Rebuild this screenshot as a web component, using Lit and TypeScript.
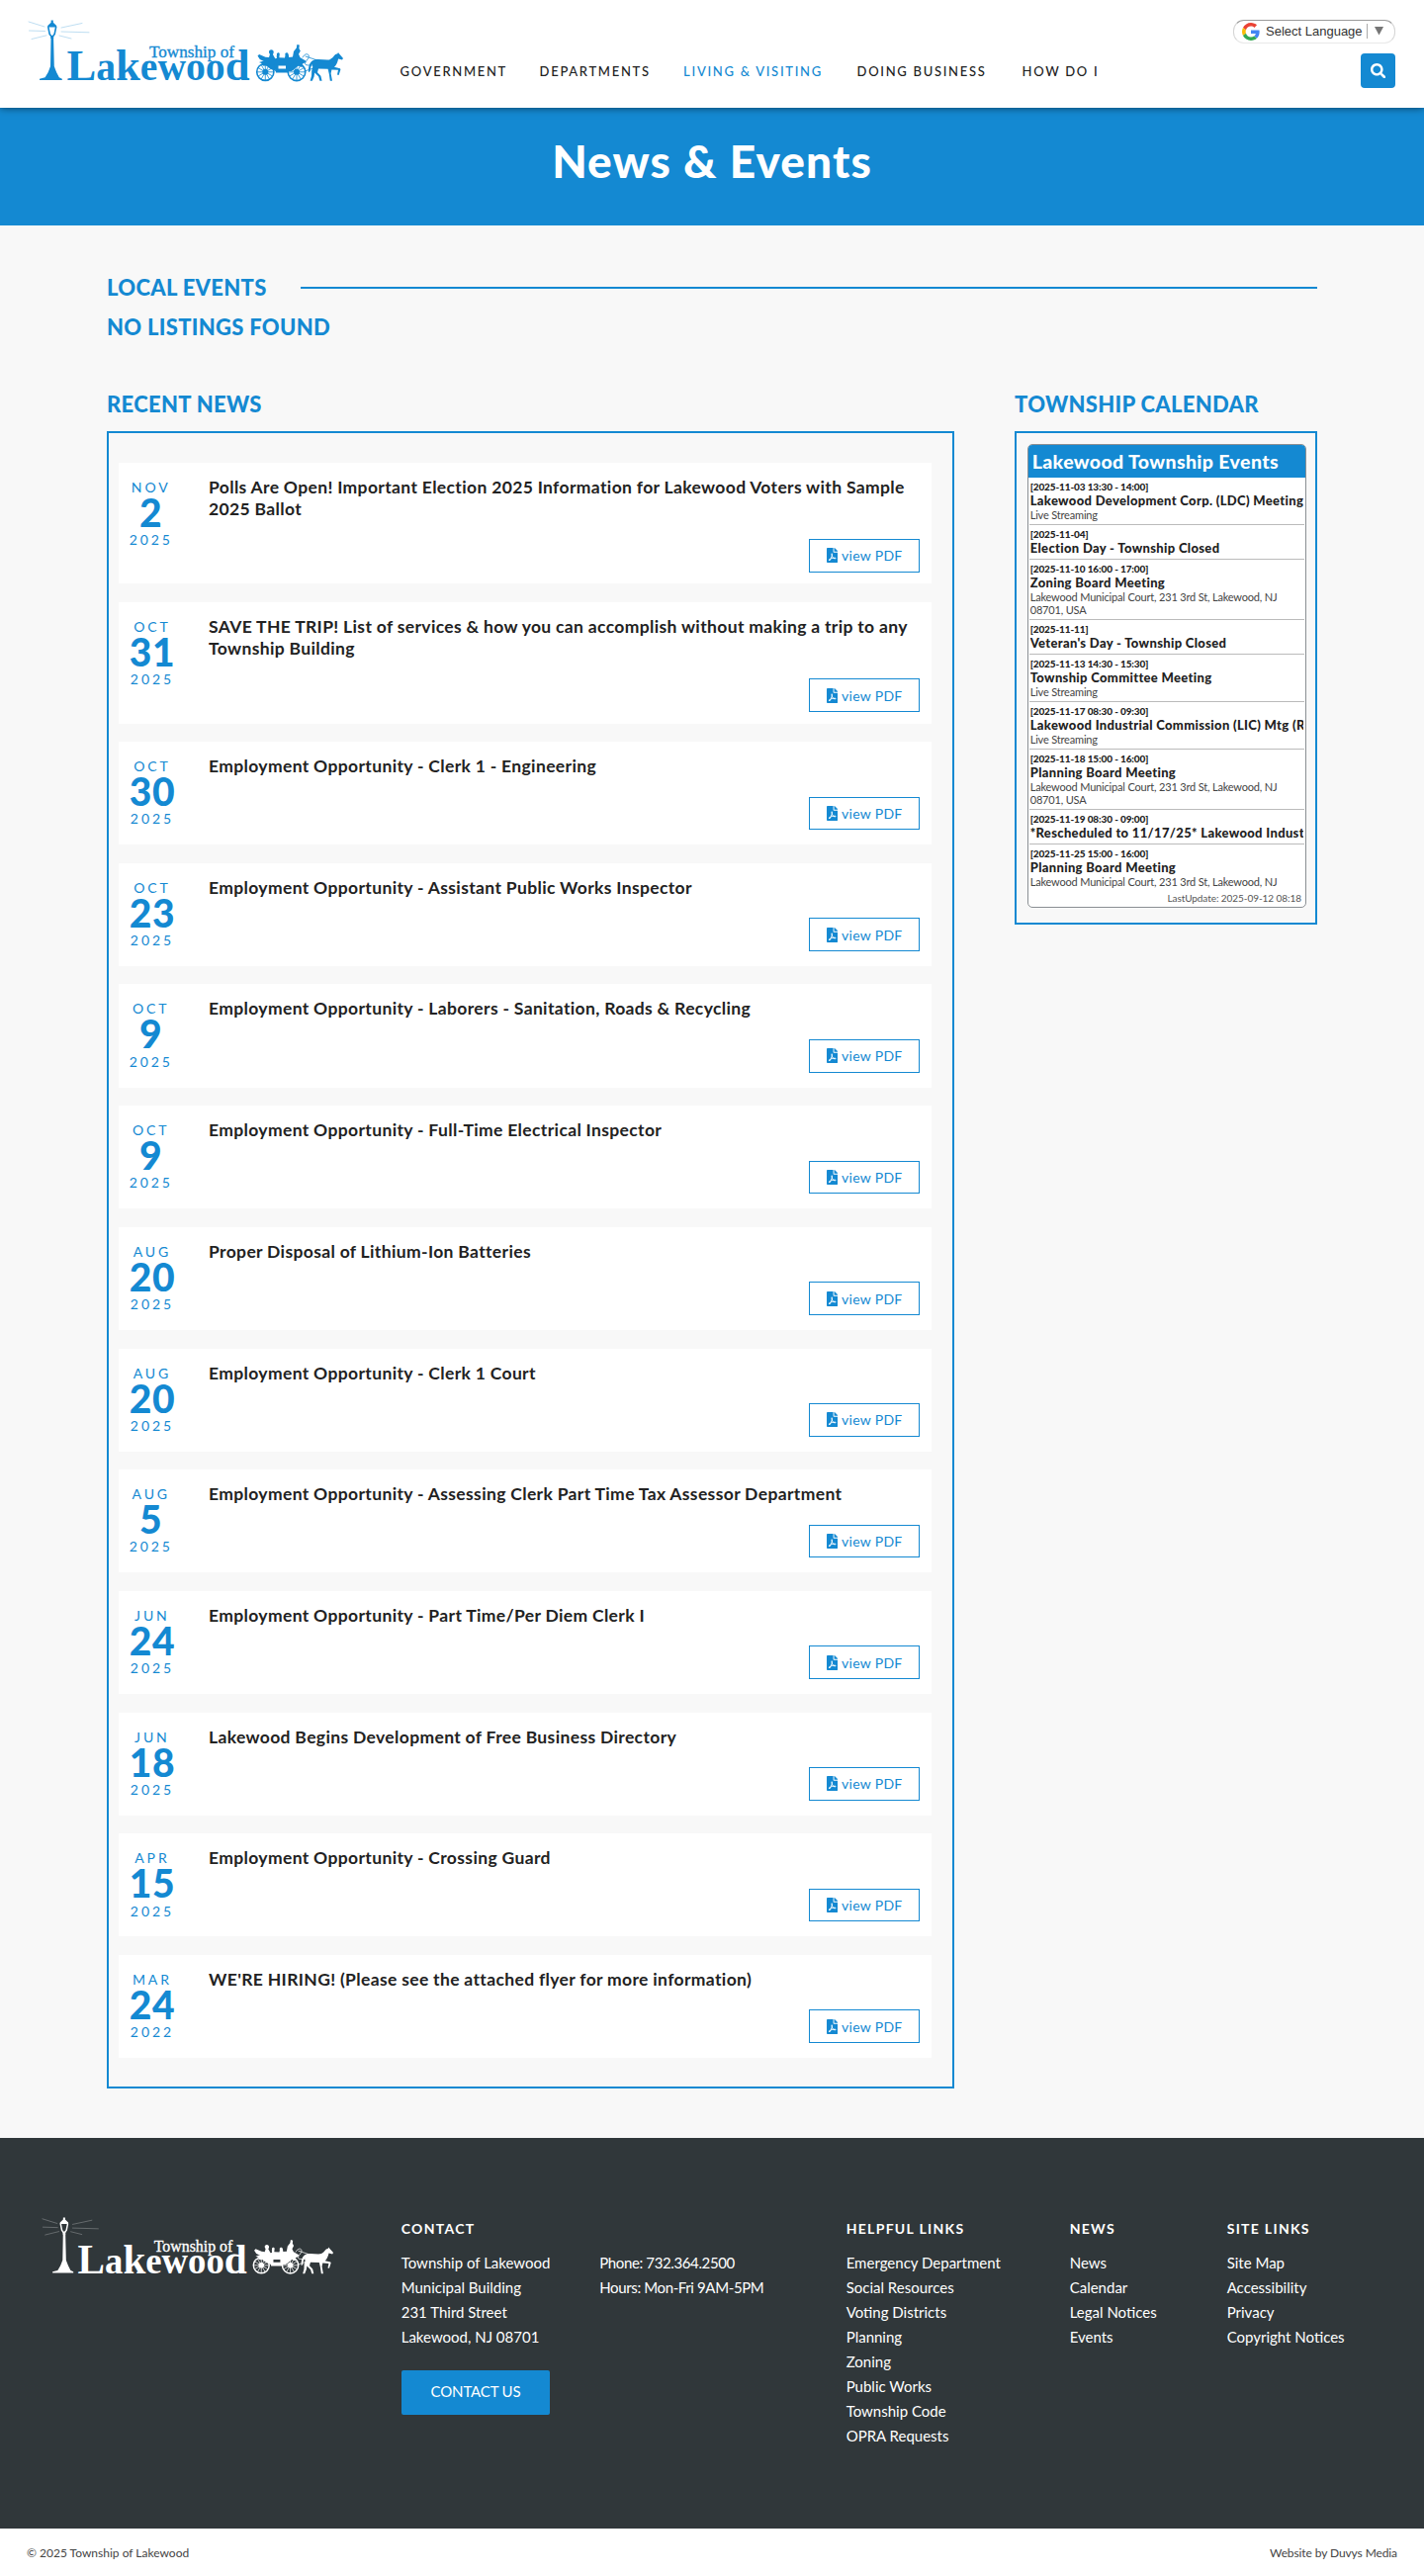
import { LitElement, html, svg, css, nothing } from 'lit';
import { customElement, property } from 'lit/decorators.js';

interface NewsItem {
	month: string;
	day: string;
	year: string;
	title: string;
}

interface CalendarEvent {
	time: string;
	title: string;
	place?: string;
}

const NAV = [ 'Government', 'Departments', 'Living & Visiting', 'Doing Business', 'How Do I' ];
const ACTIVE = 'Living & Visiting';

const NEWS: NewsItem[] = [
	{ month: 'Nov', day: '2', year: '2025', title: 'Polls Are Open! Important Election 2025 Information for Lakewood Voters with Sample 2025 Ballot' },
	{ month: 'Oct', day: '31', year: '2025', title: 'SAVE THE TRIP! List of services & how you can accomplish without making a trip to any Township Building' },
	{ month: 'Oct', day: '30', year: '2025', title: 'Employment Opportunity - Clerk 1 - Engineering' },
	{ month: 'Oct', day: '23', year: '2025', title: 'Employment Opportunity - Assistant Public Works Inspector' },
	{ month: 'Oct', day: '9', year: '2025', title: 'Employment Opportunity - Laborers - Sanitation, Roads & Recycling' },
	{ month: 'Oct', day: '9', year: '2025', title: 'Employment Opportunity - Full-Time Electrical Inspector' },
	{ month: 'Aug', day: '20', year: '2025', title: 'Proper Disposal of Lithium-Ion Batteries' },
	{ month: 'Aug', day: '20', year: '2025', title: 'Employment Opportunity - Clerk 1 Court' },
	{ month: 'Aug', day: '5', year: '2025', title: 'Employment Opportunity - Assessing Clerk Part Time Tax Assessor Department' },
	{ month: 'Jun', day: '24', year: '2025', title: 'Employment Opportunity - Part Time/Per Diem Clerk I' },
	{ month: 'Jun', day: '18', year: '2025', title: 'Lakewood Begins Development of Free Business Directory' },
	{ month: 'Apr', day: '15', year: '2025', title: 'Employment Opportunity - Crossing Guard' },
	{ month: 'Mar', day: '24', year: '2022', title: "WE'RE HIRING! (Please see the attached flyer for more information)" },
];

const COURT = 'Lakewood Municipal Court, 231 3rd St, Lakewood, NJ 08701, USA';

const EVENTS: CalendarEvent[] = [
	{ time: '2025-11-03 13:30 - 14:00', title: 'Lakewood Development Corp. (LDC) Meeting', place: 'Live Streaming' },
	{ time: '2025-11-04', title: 'Election Day - Township Closed' },
	{ time: '2025-11-10 16:00 - 17:00', title: 'Zoning Board Meeting', place: COURT },
	{ time: '2025-11-11', title: "Veteran's Day - Township Closed" },
	{ time: '2025-11-13 14:30 - 15:30', title: 'Township Committee Meeting', place: 'Live Streaming' },
	{ time: '2025-11-17 08:30 - 09:30', title: 'Lakewood Industrial Commission (LIC) Mtg (Re', place: 'Live Streaming' },
	{ time: '2025-11-18 15:00 - 16:00', title: 'Planning Board Meeting', place: COURT },
	{ time: '2025-11-19 08:30 - 09:00', title: '*Rescheduled to 11/17/25* Lakewood Industrial' },
	{ time: '2025-11-25 15:00 - 16:00', title: 'Planning Board Meeting', place: 'Lakewood Municipal Court, 231 3rd St, Lakewood, NJ' },
];

const LINKS = [
	{
		title: 'Helpful Links',
		items: [ 'Emergency Department', 'Social Resources', 'Voting Districts', 'Planning', 'Zoning', 'Public Works', 'Township Code', 'OPRA Requests' ],
	},
	{ title: 'News', items: [ 'News', 'Calendar', 'Legal Notices', 'Events' ] },
	{ title: 'Site Links', items: [ 'Site Map', 'Accessibility', 'Privacy', 'Copyright Notices' ] },
];

const spokes = ( cx: number, cy: number, r: number ) =>
	Array.from( { length: 6 }, ( _, i ) => {
		const a = ( i * Math.PI ) / 6;
		const dx = Math.cos( a ) * r;
		const dy = Math.sin( a ) * r;
		return svg`<path d="M${ cx - dx } ${ cy - dy }L${ cx + dx } ${ cy + dy }" />`;
	} );

@customElement( 'township-logo' )
class TownshipLogo extends LitElement {
	static styles = css`
		:host {
			display: block;
		}

		svg {
			display: block;
			inline-size: 100%;
			overflow: visible;
		}

		text {
			fill: currentColor;
			font-family: 'Liberation Serif', serif;
		}

		.name {
			font-size: 40px;
			font-weight: 700;
		}

		.tall {
			font-size: 45px;
		}

		.prefix {
			font-size: 17.5px;
			stroke: currentColor;
			stroke-width: 0.35;
		}
	`;

	render() {
		return html`
			<svg viewBox="28 20 320 64" fill="currentColor" stroke-linecap="round" stroke-linejoin="round">
				<g fill="none" stroke="currentColor" stroke-width="0.7" opacity="0.4">
					<path d="M29 22l16 5M29.5 31l16 .5M32 39.5l15-3.7M62 28l21-4.5M62 32l28 .8M60 36l12 3" />
				</g>
				<path d="M51.6 20.5h2.2v2.2l3.4 3.3v1.6h-9v-1.6l3.4-3.3z" />
				<path d="M48.8 27.5l1.4 7 2 2.6h1l2-2.6 1.4-7" fill="none" stroke="currentColor" stroke-width="1.6" />
				<path d="M51.2 36h3v3h-3z" />
				<path d="M51.5 38.5h2.6l.7 28.5 1.2 3.3 1.2 3 2.6 5 3 1.4v1.4H40v-1.4l5.6-1.4 3-5 1.2-3 1.2-3.3z" />
				<text class="name" x="67.5" y="81.3" textLength="185" lengthAdjust="spacingAndGlyphs"><tspan class="tall">L</tspan>a<tspan class="tall">k</tspan>ewoo<tspan class="tall">d</tspan></text>
				<text class="prefix" x="151" y="58" textLength="86" lengthAdjust="spacingAndGlyphs">Township of</text>
				<g fill="none" stroke="currentColor" stroke-width="1.6">
					<circle cx="268.3" cy="72.8" r="8.6" />
					<circle cx="300" cy="72.8" r="8.8" />
				</g>
				<g fill="none" stroke="currentColor" stroke-width="0.8">
					${ spokes( 268.3, 72.8, 8.2 ) }${ spokes( 300, 72.8, 8.2 ) }
					<path d="M306 58c3-6 9-3 5 2s-3 6 2 6h7M309 57l12 4M308 72l12-4" />
				</g>
				<path d="M260.5 56.5l1.6-1.5 6.4 2.7 3.5.4 1-3.3c-1.7-1.5-1.2-4.6 1.3-4.6s3.2 3 1.6 4.8l2.4 4.2 1.7-.4c-.3-1.6-.4-2.3 0-3.2-.9-2 2.3-3.3 2.8-1.1l-.4 3.7 5.6.3.5-2.7c-1.2-2.2 2.4-3.9 3.2-.8l.5 2.9 3.8-.4 1-5.5 2.8-3.6.6-3.4 2.4.6-.4 3.4 1.4 2.4-1.8 3.4 1.6 3.4 5.6 3.2-.6 2.2-3 .6v4l-5-2.2c-5.8-.6-8.6 2-10.2 6.4l-11 .4c-1.6-5.6-5.6-8-12.6-6l-2.4-1.4 2.4-3.5-4-2z" />
				<path d="M262 63c8-3 16-1 17 9l-5-2-7-5zM291 72c1-9 9-11 16-8l-6 3-6 5z" />
				<path d="M277 64h17l-2.5 9.5h-12.5z" />
				<path d="M281.5 66.5h7.5v3h-7.5z" fill="var(--logo-gap, #fff)" />
				<circle cx="268.3" cy="72.8" r="3" />
				<circle cx="300" cy="72.8" r="3" />
				<path d="M318 60.3c5-1 10 .6 15 .1 3-.8 4.6-3.8 6.2-5.3l2.2-.8.6-1.3.9 1.2 4.1 4.7-1 1.6-3.9-1.1c-.7 3.4-1.9 6.2-4.1 8.4l6 1.4.4 1.2-1.8 5.6-1.6-.4 1-4.9-6.6-.3-.8 3.8 1.4 7.6h-2.2l-1-7-1.2-5-9.6-.4-1 3.8 3.4 3.6 1.2 5h-2.2l-1.2-4.2-4-4-.6 3.8-1.8 4.4h-2.2l1.4-5 .2-5.4 1-3.4-.4-3c-1.3 1.2-1.7 3.6-2.1 7l-1.7 1.2c-.2-5 .4-11 6-12.7z" />
			</svg>
		`;
	}
}

@customElement( 'news-card' )
class NewsCard extends LitElement {
	@property( { attribute: false } ) item!: NewsItem;

	static styles = css`
		:host {
			background: #fff;
			box-sizing: border-box;
			color: #1489d2;
			display: grid;
			grid-template-columns: 91px 1fr;
			min-block-size: 104.2px;
			padding: 14px 12.3px 11.6px 0;
		}

		.date {
			justify-self: start;
			letter-spacing: 2.9px;
			line-height: 17px;
			margin-inline-start: 10.7px;
			padding-block-start: 2px;
			text-align: center;
			text-transform: uppercase;
		}

		.day {
			font-size: 39px;
			font-weight: 900;
			letter-spacing: 0.6px;
			line-height: 34px;
			margin-block-end: 2.3px;
		}

		.body {
			align-items: flex-end;
			display: flex;
			flex-direction: column;
			gap: 19.5px;
		}

		.title {
			align-self: stretch;
			color: #222;
			font-size: 17.5px;
			font-weight: 700;
			letter-spacing: 0.36px;
			line-height: 22px;
			margin: 0;
			word-spacing: -0.15px;
		}

		.pdf {
			align-items: center;
			block-size: 33.7px;
			border: 1px solid #1489d2;
			box-sizing: border-box;
			display: flex;
			font-size: 14px;
			gap: 3.7px;
			inline-size: 111.7px;
			letter-spacing: 0.3px;
			padding-inline-start: 17px;
		}
	`;

	render() {
		const { month, day, year, title } = this.item;
		return html`
			<div class="date">
				<div>${ month }</div>
				<div class="day">${ day }</div>
				<div>${ year }</div>
			</div>
			<div class="body">
				<h3 class="title">${ title }</h3>
				<a class="pdf">
					<svg width="11.3" height="15" viewBox="0 0 384 512" fill="currentColor">
						<path d="M181.9 256.1c-5-16-4.9-46.9-2-46.9 8.4 0 7.6 36.9 2 46.9zm-1.7 47.2c-7.7 20.2-17.3 43.3-28.4 62.7 18.3-7 39-17.2 62.9-21.9-12.7-9.6-24.9-23.4-34.5-40.8zM86.1 428.1c0 .8 13.2-5.4 34.9-40.2-6.7 6.3-29.1 24.5-34.9 40.2zM248 160h136v328c0 13.3-10.7 24-24 24H24c-13.3 0-24-10.7-24-24V24C0 10.7 10.7 0 24 0h200v136c0 13.2 10.8 24 24 24zm-8 171.8c-20-12.2-33.3-29-42.7-53.8 4.5-18.5 11.6-46.6 6.2-64.2-4.7-29.4-42.4-26.5-47.8-6.8-5 18.3-.4 44.1 8.1 77-11.6 27.6-28.7 64.6-40.8 85.8-.1 0-.1.1-.2.1-27.1 13.9-73.6 44.5-54.5 68 5.6 6.9 16 10 21.5 10 17.9 0 35.7-18 61.1-61.8 25.8-8.5 54.1-19.1 79-23.2 21.7 11.8 47.1 19.5 64 19.5 29.2 0 31.2-32 19.7-43.4-13.9-13.6-54.3-9.7-73.6-7.2zM377 105L279 7c-4.5-4.5-10.6-7-17-7h-6v128h128v-6.1c0-6.3-2.5-12.4-7-16.9zm-74.1 255.3c4.1-2.7-2.5-11.9-42.8-9 37.1 15.8 42.8 9 42.8 9z" />
					</svg>
					view PDF
				</a>
			</div>
		`;
	}
}

@customElement( 'township-calendar' )
class TownshipCalendar extends LitElement {
	@property( { attribute: false } ) events: CalendarEvent[] = [];

	static styles = css`
		:host {
			background: #fff;
			border: 1px solid #8a8f93;
			border-radius: 5px;
			box-sizing: border-box;
			color: #222;
			display: block;
			overflow: hidden;
		}

		.head {
			background: #1489d2;
			color: #fff;
			font-size: 19.5px;
			font-weight: 900;
			letter-spacing: 0.38px;
			line-height: 33px;
			padding-inline-start: 4px;
		}

		.list {
			padding-inline: 1px;
		}

		.event {
			border-block-end: 1px solid #bbb;
			padding: 3px 1px 2.5px;
			white-space: nowrap;
		}

		.event:last-child {
			border: 0;
			padding-block-end: 0;
		}

		.time {
			font-size: 10px;
			font-weight: 900;
			letter-spacing: -0.12px;
			line-height: 13.5px;
		}

		.title {
			font-size: 13px;
			font-weight: 900;
			letter-spacing: 0.33px;
			line-height: 15px;
			overflow: hidden;
		}

		.place {
			color: #444;
			font-size: 11px;
			letter-spacing: -0.18px;
			line-height: 13px;
			padding-inline-end: 8px;
			white-space: normal;
		}

		.updated {
			color: #555;
			font-size: 10px;
			letter-spacing: -0.06px;
			line-height: 18px;
			padding-block-start: 1px;
			padding-inline-end: 4px;
			text-align: end;
		}
	`;

	render() {
		return html`
			<div class="head">Lakewood Township Events</div>
			<div class="list">
				${ this.events.map( ( e ) => html`
					<div class="event">
						<div class="time">[${ e.time }]</div>
						<div class="title">${ e.title }</div>
						${ e.place ? html`<div class="place">${ e.place }</div>` : nothing }
					</div>
				` ) }
			</div>
			<div class="updated">LastUpdate: 2025-09-12 08:18</div>
		`;
	}
}

@customElement( 'app-root' )
class AppRoot extends LitElement {
	static styles = css`
		:host {
			background: #f8f8f8;
			color: #222;
			display: block;
			font: 14px Lato, sans-serif;
		}

		* {
			box-sizing: border-box;
		}

		.header {
			align-items: start;
			background: #fff;
			block-size: 109px;
			box-shadow: 0 0 8px rgb( 0 0 0 / 0.6 );
			display: grid;
			grid-template-columns: 376.6px 1fr auto;
			padding: 20px 29px 0 28px;
			position: relative;
		}

		.logo {
			color: #1489d2;
			inline-size: 320px;
		}

		.nav {
			display: grid;
			font-size: 13px;
			font-weight: 500;
			grid-template-columns: 141px 145.5px 175.5px 167px auto;
			letter-spacing: 1.7px;
			line-height: 16px;
			padding-block-start: 44px;
			text-transform: uppercase;
			white-space: nowrap;
		}

		.active {
			color: #1489d2;
		}

		.tools {
			align-items: flex-end;
			display: flex;
			flex-direction: column;
			gap: 10.5px;
		}

		.language {
			align-items: center;
			block-size: 23.5px;
			border: 1px solid;
			border-color: #9b9b9b #d5d5d5 #e8e8e8;
			border-radius: 11px;
			color: #333;
			display: flex;
			font: 13px 'Liberation Sans', sans-serif;
			inline-size: 164px;
			padding-inline-start: 8px;
		}

		.language-label {
			border-inline-end: 1px solid #aaa;
			inline-size: 103px;
			line-height: 15px;
			margin-inline: 6px 7px;
			white-space: nowrap;
		}

		.search {
			background: #1489d2;
			block-size: 35px;
			border-radius: 4px;
			display: grid;
			inline-size: 35px;
			place-items: center;
		}

		.banner {
			background: #1489d2;
			block-size: 119px;
			color: #fff;
			font-size: 46px;
			font-weight: 900;
			letter-spacing: 1.1px;
			line-height: 46px;
			margin: 0;
			padding-block-start: 31px;
			text-align: center;
		}

		.main {
			block-size: 1934px;
			inline-size: 1224px;
			margin-inline: auto;
			padding-block-start: 48px;
		}

		.heading {
			color: #1489d2;
			font-size: 22px;
			font-weight: 900;
			letter-spacing: 0.3px;
			line-height: 30px;
			margin: 0;
			text-transform: uppercase;
		}

		.ruled {
			align-items: center;
			display: grid;
			grid-template-columns: 196px 1fr;
			margin-block-end: 10px;
		}

		.rule {
			background: #1489d2;
			block-size: 2px;
		}

		.columns {
			display: grid;
			gap: 61px;
			grid-template-columns: 857px 306px;
			margin-block-start: 48px;
		}

		.box {
			border: 2px solid #1489d2;
			margin-block-start: 12px;
		}

		.news {
			display: grid;
			gap: 18.5px;
			padding: 29.5px 21px 28.7px 10px;
		}

		.calendar {
			block-size: 499px;
			padding: 10.7px 9px 0 10.7px;
		}

		.footer {
			background: #30373a;
			block-size: 395px;
			color: #fff;
			display: grid;
			grid-template-columns: 363.7px 200.6px 249.4px 226px 159px 1fr;
			padding: 80px 0 0 42px;
		}

		.footer-logo {
			--logo-gap: #30373a;
			inline-size: 296px;
		}

		.footer-title {
			font-size: 14px;
			font-weight: 700;
			letter-spacing: 1.3px;
			line-height: 20px;
			margin: 2px 0 12.4px;
			text-transform: uppercase;
		}

		.lines {
			font-size: 15px;
			line-height: 25px;
			list-style: none;
			margin: 0;
			padding: 0;
		}

		.phone {
			letter-spacing: -0.38px;
			padding-block-start: 34.4px;
		}

		.contact {
			background: #1489d2;
			block-size: 45.3px;
			border-radius: 2px;
			display: block;
			font-size: 15px;
			inline-size: 150.7px;
			letter-spacing: -0.15px;
			line-height: 43px;
			margin-block-start: 20.6px;
			text-align: center;
		}

		.bottom {
			align-items: center;
			background: #fff;
			block-size: 48px;
			color: #444;
			display: flex;
			font-size: 12px;
			justify-content: space-between;
			padding-inline: 27px;
		}

		.credit {
			letter-spacing: -0.1px;
		}
	`;

	renderHeader() {
		return html`
			<header class="header">
				<township-logo class="logo"></township-logo>
				<nav class="nav">
					${ NAV.map( ( label ) => html`<a class=${ label === ACTIVE ? 'active' : '' }>${ label }</a>` ) }
				</nav>
				<div class="tools">
					<div class="language">
						<svg width="18" height="18" viewBox="0 0 48 48">
							<path fill="#ea4335" d="M24 9.5c3.54 0 6.71 1.22 9.21 3.6l6.85-6.85C35.9 2.38 30.47 0 24 0 14.62 0 6.51 5.38 2.56 13.22l7.98 6.19C12.43 13.72 17.74 9.5 24 9.5z" />
							<path fill="#4285f4" d="M46.98 24.55c0-1.57-.15-3.09-.38-4.55H24v9.02h12.94c-.58 2.96-2.26 5.48-4.78 7.18l7.73 6c4.51-4.18 7.09-10.36 7.09-17.65z" />
							<path fill="#fbbc05" d="M10.53 28.59c-.48-1.45-.76-2.99-.76-4.59s.27-3.14.76-4.59l-7.98-6.19C.92 16.46 0 20.12 0 24s.92 7.54 2.56 10.78l7.97-6.19z" />
							<path fill="#34a853" d="M24 48c6.48 0 11.93-2.13 15.89-5.81l-7.73-6c-2.15 1.45-4.92 2.3-8.16 2.3-6.26 0-11.57-4.22-13.47-9.91l-7.98 6.19C6.51 42.62 14.62 48 24 48z" />
						</svg>
						<span class="language-label">Select Language</span>
						<svg width="9" height="9" viewBox="0 0 9 9"><path d="M0 0h9L4.5 8.5z" fill="#767676" /></svg>
					</div>
					<a class="search">
						<svg width="15.5" height="15.5" viewBox="0 0 512 512" fill="#fff">
							<path d="M505 442.7L405.3 343c-4.5-4.5-10.6-7-17-7H372c27.6-35.3 44-79.7 44-128C416 93.1 322.9 0 208 0S0 93.1 0 208s93.1 208 208 208c48.3 0 92.7-16.4 128-44v16.3c0 6.4 2.5 12.5 7 17l99.7 99.7c9.4 9.4 24.6 9.4 33.9 0l28.3-28.3c9.4-9.4 9.4-24.6.1-34zM208 336c-70.7 0-128-57.2-128-128 0-70.7 57.2-128 128-128 70.7 0 128 57.2 128 128 0 70.7-57.2 128-128 128z" />
						</svg>
					</a>
				</div>
			</header>
		`;
	}

	renderFooter() {
		return html`
			<footer class="footer">
				<township-logo class="footer-logo"></township-logo>
				<div>
					<h4 class="footer-title">Contact</h4>
					<div class="lines">Township of Lakewood<br />Municipal Building<br />231 Third Street<br />Lakewood, NJ 08701</div>
					<a class="contact">CONTACT US</a>
				</div>
				<div class="lines phone">Phone: 732.364.2500<br />Hours: Mon-Fri 9AM-5PM</div>
				${ LINKS.map( ( group ) => html`
					<div>
						<h4 class="footer-title">${ group.title }</h4>
						<ul class="lines">
							${ group.items.map( ( item ) => html`<li>${ item }</li>` ) }
						</ul>
					</div>
				` ) }
			</footer>
			<div class="bottom">
				<span>© 2025 Township of Lakewood</span>
				<span class="credit">Website by Duvys Media</span>
			</div>
		`;
	}

	render() {
		return html`
			${ this.renderHeader() }
			<h1 class="banner">News &amp; Events</h1>
			<main class="main">
				<div class="ruled">
					<h2 class="heading">Local Events</h2>
					<div class="rule"></div>
				</div>
				<h2 class="heading">No Listings Found</h2>
				<div class="columns">
					<section>
						<h2 class="heading">Recent News</h2>
						<div class="box news">
							${ NEWS.map( ( item ) => html`<news-card .item=${ item }></news-card>` ) }
						</div>
					</section>
					<section>
						<h2 class="heading">Township Calendar</h2>
						<div class="box calendar">
							<township-calendar .events=${ EVENTS }></township-calendar>
						</div>
					</section>
				</div>
			</main>
			${ this.renderFooter() }
		`;
	}
}
